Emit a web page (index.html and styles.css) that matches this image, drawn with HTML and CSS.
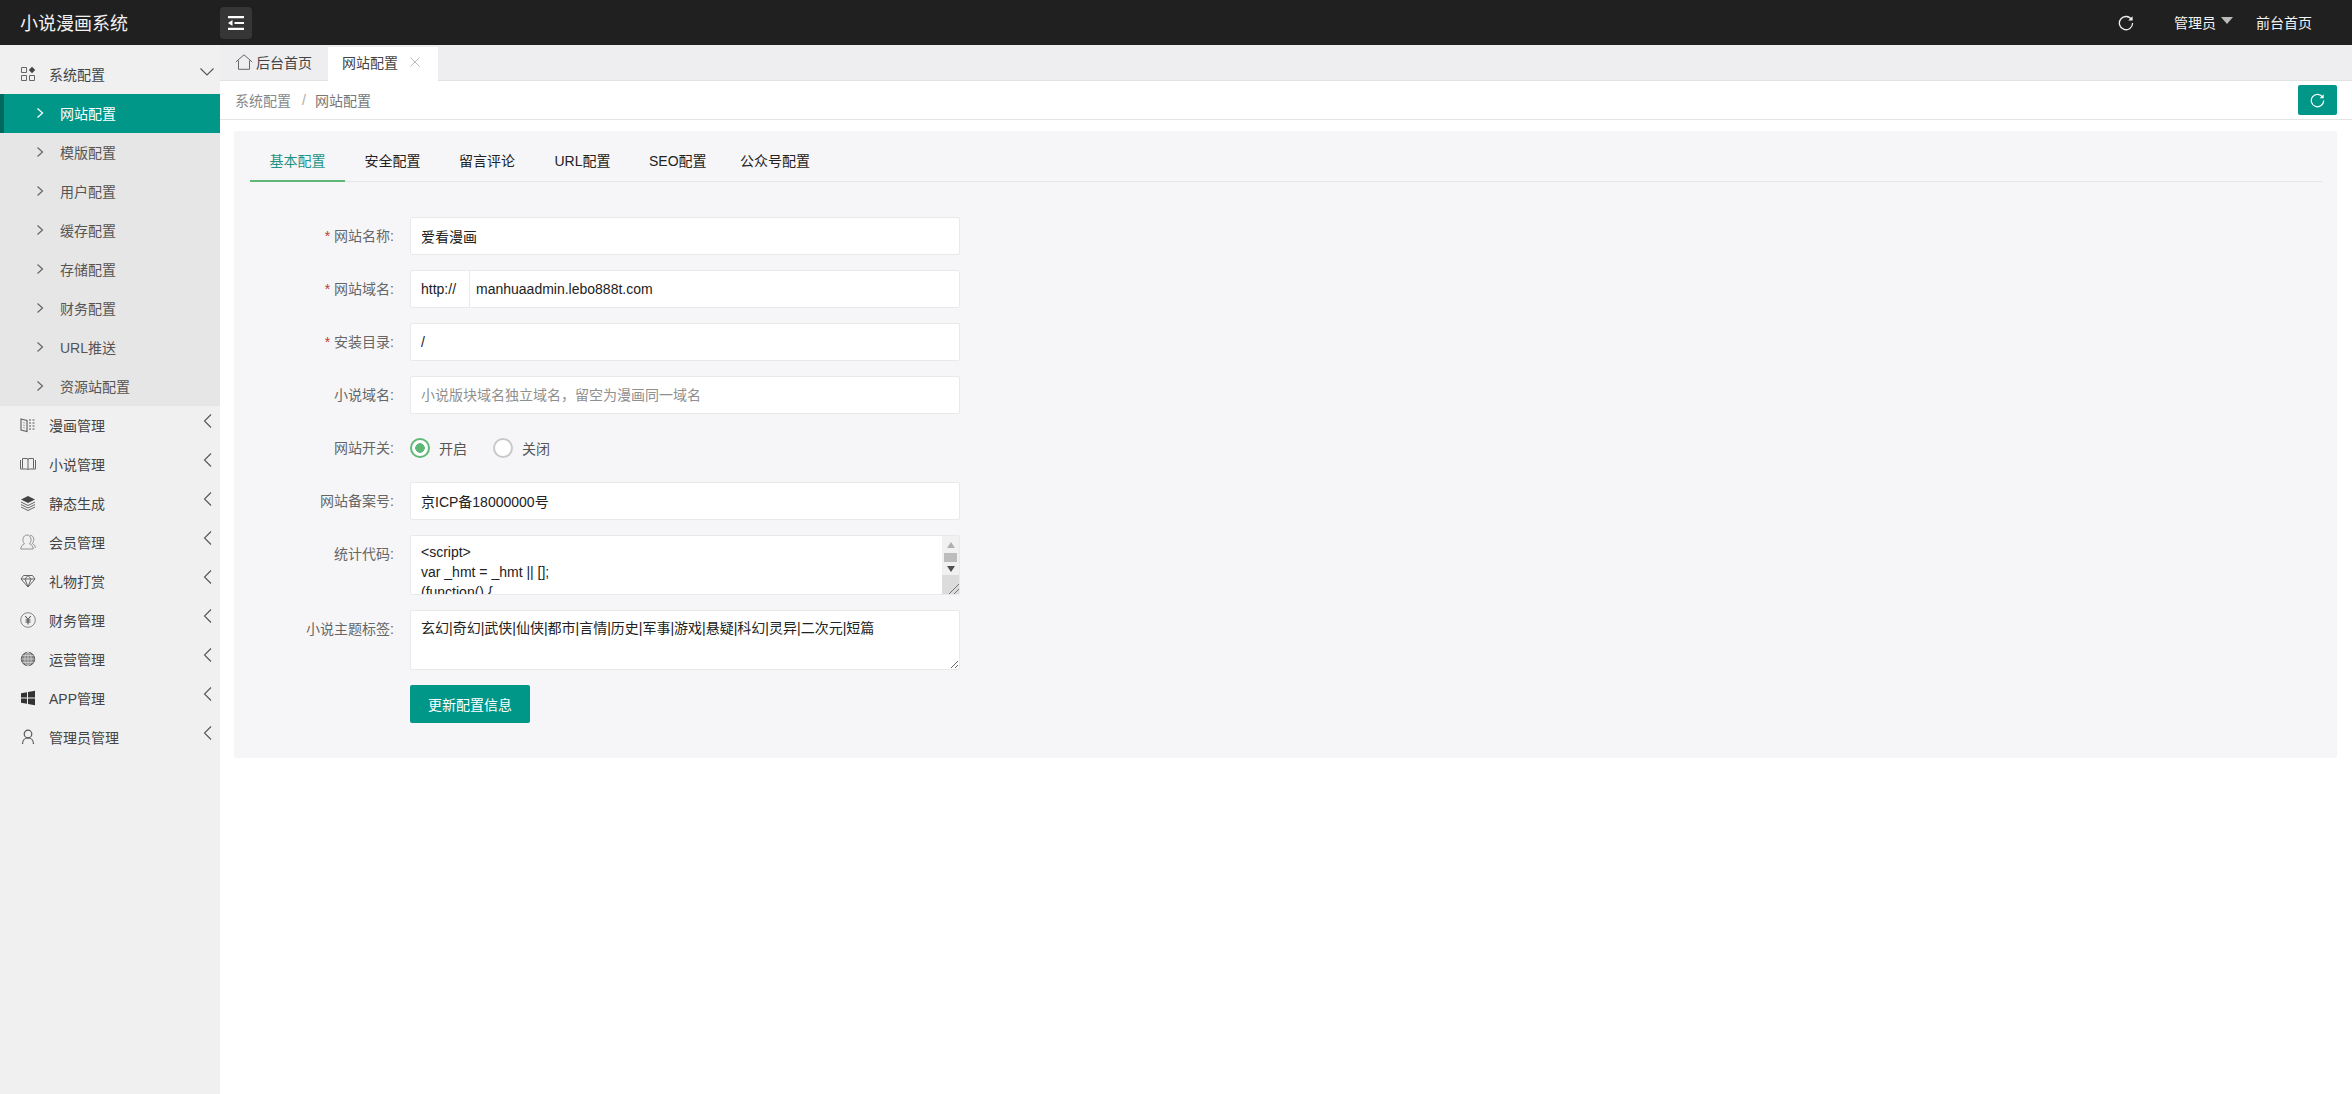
FILE: index.html
```html
<!DOCTYPE html>
<html lang="zh-CN">
<head>
<meta charset="utf-8">
<title>小说漫画系统</title>
<link rel="stylesheet" href="styles.css">
</head>
<body>
<header class="topbar">
  <div class="brand">小说漫画系统</div>
  <button class="menu-toggle" type="button" aria-label="toggle">
    <svg width="16" height="14" viewBox="0 0 16 14"><path d="M0 1.2h16M6.5 7H16M0 12.8h16" stroke="#fff" stroke-width="2.2" fill="none"/><path d="M0 7l4.5-3v6z" fill="#fff"/></svg>
  </button>
  <div class="top-actions">
    <svg class="top-refresh" width="16" height="16" viewBox="0 0 16 16"><path d="M13.6 4.6A6.6 6.6 0 1 0 14.6 8" fill="none" stroke="#eee" stroke-width="1.3"/><path d="M14.6 1.2v4.4h-4.4z" fill="#eee"/></svg>
    <span class="top-user">管理员<i class="caret"></i></span>
    <span class="top-link">前台首页</span>
  </div>
</header>
<div class="shell">
  <aside class="sidebar">
    <div class="nav-item">
      <svg class="nav-icon" viewBox="0 0 16 16"><path d="M1.5 1.5h5v5h-5zM1.5 9.5h5v5h-5zM9.5 9.5h5v5h-5z" fill="none" stroke="#666"/><path d="M12 .8l3.2 3.2-3.2 3.2L8.800 4z" fill="#444"/></svg>
      <span>系统配置</span>
      <svg class="nav-arrow" viewBox="0 0 16 16"><path d="M1.500 4.500L8 11l6.500-6.500" fill="none" stroke="#555" stroke-width="1.100"/></svg>
    </div>
    <div class="submenu">
      <div class="sub-item active"><svg class="sub-arrow" viewBox="0 0 8 12"><path d="M1.500 1.500L6.500 6l-5 4.500" fill="none" stroke="#fff" stroke-width="1.300"/></svg><span>网站配置</span></div>
      <div class="sub-item"><svg class="sub-arrow" viewBox="0 0 8 12"><path d="M1.500 1.500L6.500 6l-5 4.500" fill="none" stroke="#666" stroke-width="1.200"/></svg><span>模版配置</span></div>
      <div class="sub-item"><svg class="sub-arrow" viewBox="0 0 8 12"><path d="M1.500 1.500L6.500 6l-5 4.500" fill="none" stroke="#666" stroke-width="1.200"/></svg><span>用户配置</span></div>
      <div class="sub-item"><svg class="sub-arrow" viewBox="0 0 8 12"><path d="M1.500 1.500L6.500 6l-5 4.500" fill="none" stroke="#666" stroke-width="1.200"/></svg><span>缓存配置</span></div>
      <div class="sub-item"><svg class="sub-arrow" viewBox="0 0 8 12"><path d="M1.500 1.500L6.500 6l-5 4.500" fill="none" stroke="#666" stroke-width="1.200"/></svg><span>存储配置</span></div>
      <div class="sub-item"><svg class="sub-arrow" viewBox="0 0 8 12"><path d="M1.500 1.500L6.500 6l-5 4.500" fill="none" stroke="#666" stroke-width="1.200"/></svg><span>财务配置</span></div>
      <div class="sub-item"><svg class="sub-arrow" viewBox="0 0 8 12"><path d="M1.500 1.500L6.500 6l-5 4.500" fill="none" stroke="#666" stroke-width="1.200"/></svg><span>URL推送</span></div>
      <div class="sub-item"><svg class="sub-arrow" viewBox="0 0 8 12"><path d="M1.500 1.500L6.500 6l-5 4.500" fill="none" stroke="#666" stroke-width="1.200"/></svg><span>资源站配置</span></div>
    </div>
    <div class="nav-item">
      <svg class="nav-icon" viewBox="0 0 16 16"><path d="M1 2l6 1.500v11L1 13z" fill="none" stroke="#666" stroke-width="1.200"/><path d="M3 5.500l2 .5M3 8l2 .5M3 10.500l2 .5" stroke="#aaa"/><path d="M9 3h2M12.500 3h2M9 6h2M12.500 6h2M9 9h2M12.500 9h2M9 12h2M12.500 12h2" stroke="#888" stroke-width="1.300"/></svg>
      <span>漫画管理</span>
      <svg class="nav-arrow back" viewBox="0 0 16 16"><path d="M11 1.500L4.500 8l6.500 6.500" fill="none" stroke="#555" stroke-width="1.100"/></svg>
    </div>
    <div class="nav-item">
      <svg class="nav-icon" viewBox="0 0 16 16"><path d="M.5 4v9M15.500 4v9M2.500 12.500V2.500H7Q8 2.500 8 4v9M13.500 12.500V2.500H9Q8 2.500 8 4M.5 13h6l1.500.5 1.500-.5h6" fill="none" stroke="#666"/></svg>
      <span>小说管理</span>
      <svg class="nav-arrow back" viewBox="0 0 16 16"><path d="M11 1.500L4.500 8l6.500 6.500" fill="none" stroke="#555" stroke-width="1.100"/></svg>
    </div>
    <div class="nav-item">
      <svg class="nav-icon" viewBox="0 0 16 16"><path d="M8 1l7 3.500L8 8 1 4.500z" fill="#444"/><path d="M1 7l7 3.500L15 7M1 9.500L8 13l7-3.500M1 12l7 3.500 7-3.500" fill="none" stroke="#666"/></svg>
      <span>静态生成</span>
      <svg class="nav-arrow back" viewBox="0 0 16 16"><path d="M11 1.500L4.500 8l6.500 6.500" fill="none" stroke="#555" stroke-width="1.100"/></svg>
    </div>
    <div class="nav-item">
      <svg class="nav-icon" viewBox="0 0 16 16"><path d="M.8 15c0-3 1.800-4.300 3.700-5.200-1.500-1.500-1.700-3-1.500-5C3.300 2.500 5 1 7 1s3.700 1.500 4 3.800c.2 2-.3 3.500-1.500 5 2 .9 3.700 2.200 3.700 5.200zM10 1.200c2.500.3 3.800 2 3.800 4 0 1.500-.5 3-1.500 4.300 1.800.8 3 2.200 3 4.500" fill="none" stroke="#888" stroke-width=".9"/></svg>
      <span>会员管理</span>
      <svg class="nav-arrow back" viewBox="0 0 16 16"><path d="M11 1.500L4.500 8l6.500 6.500" fill="none" stroke="#555" stroke-width="1.100"/></svg>
    </div>
    <div class="nav-item">
      <svg class="nav-icon" viewBox="0 0 16 16"><path d="M3.500 2.500h9L15 6l-7 8-7-8zM1 6h14M5 6l3 8 3-8M5 6l3-3.500L11 6" fill="none" stroke="#666"/></svg>
      <span>礼物打赏</span>
      <svg class="nav-arrow back" viewBox="0 0 16 16"><path d="M11 1.500L4.500 8l6.500 6.500" fill="none" stroke="#555" stroke-width="1.100"/></svg>
    </div>
    <div class="nav-item">
      <svg class="nav-icon" viewBox="0 0 16 16"><circle cx="8" cy="8" r="7.300" fill="none" stroke="#777" stroke-width=".9"/><path d="M5.300 4L8 7.500 10.700 4M8 7.500V12.500M5.500 8h5M5.500 10h5" fill="none" stroke="#444"/></svg>
      <span>财务管理</span>
      <svg class="nav-arrow back" viewBox="0 0 16 16"><path d="M11 1.500L4.500 8l6.500 6.500" fill="none" stroke="#555" stroke-width="1.100"/></svg>
    </div>
    <div class="nav-item">
      <svg class="nav-icon" viewBox="0 0 16 16"><circle cx="8" cy="8" r="6.700" fill="#888" stroke="#555"/><path d="M1.500 8h13M2.500 4.500h11M2.500 11.500h11M8 1.300v13.400" stroke="#ddd" stroke-width=".7"/><ellipse cx="8" cy="8" rx="3.200" ry="6.700" fill="none" stroke="#ddd" stroke-width=".7"/></svg>
      <span>运营管理</span>
      <svg class="nav-arrow back" viewBox="0 0 16 16"><path d="M11 1.500L4.500 8l6.500 6.500" fill="none" stroke="#555" stroke-width="1.100"/></svg>
    </div>
    <div class="nav-item">
      <svg class="nav-icon" viewBox="0 0 16 16"><path d="M1 3.200l6-1v5.300H1zM8 2l7-1.200v6.700H8zM1 8.500h6v5.300l-6-1zM8 8.500h7v6.700L8 14z" fill="#333"/></svg>
      <span>APP管理</span>
      <svg class="nav-arrow back" viewBox="0 0 16 16"><path d="M11 1.500L4.500 8l6.500 6.500" fill="none" stroke="#555" stroke-width="1.100"/></svg>
    </div>
    <div class="nav-item">
      <svg class="nav-icon" viewBox="0 0 16 16"><circle cx="8" cy="5" r="3.800" fill="none" stroke="#555" stroke-width="1.200"/><path d="M2.500 15c0-3.500 2.300-6 5.500-6s5.500 2.500 5.500 6" fill="none" stroke="#555" stroke-width="1.200"/></svg>
      <span>管理员管理</span>
      <svg class="nav-arrow back" viewBox="0 0 16 16"><path d="M11 1.500L4.500 8l6.500 6.500" fill="none" stroke="#555" stroke-width="1.100"/></svg>
    </div>
  </aside>
  <main class="main">
    <div class="page-tabs">
      <div class="page-tab home">
        <svg width="18" height="16" viewBox="0 0 18 16"><path d="M.8 8L9 .8 17.200 8M3.500 6.500v8.800h11V6.500" fill="none" stroke="#666"/></svg>
        <span>后台首页</span>
      </div>
      <div class="page-tab current">
        <span>网站配置</span>
        <svg width="10" height="10" viewBox="0 0 10 10"><path d="M.5.5l9 9M9.500.5l-9 9" stroke="#bbb"/></svg>
      </div>
    </div>
    <div class="crumbs">
      <span class="crumb">系统配置</span>
      <span class="crumb-sep">/</span>
      <span class="crumb last">网站配置</span>
      <button class="reload" type="button" aria-label="reload">
        <svg width="15" height="15" viewBox="0 0 16 16"><path d="M13.600 4.600A6.600 6.600 0 1 0 14.600 8" fill="none" stroke="#fff" stroke-width="1.300"/><path d="M14.600 1.200v4.400h-4.400z" fill="#fff"/></svg>
      </button>
    </div>
    <section class="card">
      <nav class="form-tabs">
        <span class="form-tab on">基本配置</span>
        <span class="form-tab">安全配置</span>
        <span class="form-tab">留言评论</span>
        <span class="form-tab">URL配置</span>
        <span class="form-tab">SEO配置</span>
        <span class="form-tab">公众号配置</span>
      </nav>
      <form class="form">
        <div class="field">
          <label class="field-label"><em>*</em> 网站名称:</label>
          <input class="text-input" type="text" value="爱看漫画">
        </div>
        <div class="field">
          <label class="field-label"><em>*</em> 网站域名:</label>
          <div class="input-group">
            <span class="input-prefix">http://</span>
            <input class="group-input" type="text" value="manhuaadmin.lebo888t.com">
          </div>
        </div>
        <div class="field">
          <label class="field-label"><em>*</em> 安装目录:</label>
          <input class="text-input" type="text" value="/">
        </div>
        <div class="field">
          <label class="field-label">小说域名:</label>
          <input class="text-input" type="text" placeholder="小说版块域名独立域名，留空为漫画同一域名">
        </div>
        <div class="field">
          <label class="field-label">网站开关:</label>
          <div class="radios">
            <label class="radio"><input type="radio" name="sw" checked><span>开启</span></label>
            <label class="radio"><input type="radio" name="sw"><span>关闭</span></label>
          </div>
        </div>
        <div class="field">
          <label class="field-label">网站备案号:</label>
          <input class="text-input" type="text" value="京ICP备18000000号">
        </div>
        <div class="field">
          <label class="field-label">统计代码:</label>
          <div class="area-wrap">
            <textarea class="area code"><script>
var _hmt = _hmt || [];
(function() {
  var hm = document.createElement("script");
</script></textarea>
            <div class="fake-scroll">
              <i class="up"></i><b></b><i class="down"></i>
              <div class="scroll-rest"></div>
            </div>
          </div>
        </div>
        <div class="field">
          <label class="field-label">小说主题标签:</label>
          <div class="area-wrap">
            <textarea class="area tags">玄幻|奇幻|武侠|仙侠|都市|言情|历史|军事|游戏|悬疑|科幻|灵异|二次元|短篇</textarea>
          </div>
        </div>
        <div class="field">
          <span class="field-label"></span>
          <button class="submit" type="button">更新配置信息</button>
        </div>
      </form>
    </section>
  </main>
</div>
</body>
</html>
```
FILE: styles.css
```css
* { box-sizing: border-box; }
html, body { margin: 0; height: 100%; }
body {
  font-family: "Liberation Sans", "Noto Sans CJK SC", sans-serif;
  font-size: 14px;
  color: #333;
  background: #fff;
  display: flex;
  flex-direction: column;
  overflow: hidden;
}
button { font-family: inherit; border: 0; padding: 0; cursor: pointer; }

.topbar {
  height: 45px;
  flex: none;
  background: #202020;
  display: flex;
  align-items: center;
  color: #fff;
}
.brand { width: 220px; padding: 0 0 2px 20px; font-size: 18px; color: #f2f2f2; }
.menu-toggle {
  width: 32px;
  height: 32px;
  background: #363636;
  border-radius: 4px;
  display: flex;
  align-items: center;
  justify-content: center;
}
.top-actions { margin-left: auto; display: flex; align-items: center; padding-right: 40px; color: #f4f4f4; }
.top-refresh { margin-right: 40px; }
.top-user { display: flex; align-items: center; width: 82px; padding-bottom: 2px; }
.top-link { padding-bottom: 2px; }
.caret {
  margin: -2px 0 0 5px;
  border-style: solid;
  border-width: 7px 6.500px 0;
  border-color: #bbb transparent transparent;
}

.shell { flex: 1; display: flex; min-height: 0; }
.sidebar { width: 220px; flex: none; background: #f0f0f1; padding-top: 10px; color: #444; }
.nav-item {
  height: 39px;
  display: flex;
  align-items: center;
  padding: 0 0 2px 20px;
  position: relative;
}
.nav-icon { width: 16px; height: 16px; margin-right: 13px; flex: none; }
.nav-arrow { position: absolute; left: 199px; top: 9px; width: 16px; height: 16px; }
.nav-arrow.back { left: 200px; top: 7px; }
.submenu { background: #e6e6e7; }
.sub-item { height: 39px; display: flex; align-items: center; padding: 0 0 2px 36px; color: #555; }
.sub-item span { margin-left: 16px; }
.sub-arrow { width: 8px; height: 12px; flex: none; }
.sub-item.active { background: #009688; color: #fff; border-left: 4px solid #00695f; padding-left: 32px; }

.main { flex: 1; min-width: 0; display: flex; flex-direction: column; }
.page-tabs {
  height: 36px;
  flex: none;
  background: #eeeef0;
  border-bottom: 1px solid #e2e2e2;
  display: flex;
  align-items: flex-end;
  padding-left: 15px;
}
.page-tab { height: 34px; display: flex; align-items: center; color: #444; }
.page-tab.home { gap: 3px; width: 93px; padding-bottom: 1px; height: 35px; }
.page-tab.current { width: 110px; background: #fff; padding-left: 14px; gap: 12px; margin-bottom: -1px; height: 34px; padding-bottom: 4px; }

.crumbs {
  height: 39px;
  flex: none;
  border-bottom: 1px solid #e4e4e4;
  display: flex;
  align-items: center;
  padding: 0 15px;
  color: #888;
}
.crumb-sep { margin: 0 9px 0 11px; color: #aaa; }
.crumb.last { color: #777; }
.reload {
  margin-left: auto;
  width: 39px;
  height: 30px;
  background: #009688;
  border-radius: 2px;
  display: flex;
  align-items: center;
  justify-content: center;
}

.card {
  margin: 11px 15px 0 14px;
  background: #f6f6f8;
  border-radius: 2px;
  padding: 0 15px 35px 16px;
}
.form-tabs { height: 51px; display: flex; border-bottom: 1px solid #e6e6e6; }
.form-tab { height: 51px; padding: 10px 19px 0 19.500px; line-height: 40px; color: #222; }
.form-tab.on { color: #1f9384; border-bottom: 2px solid #5fb878; width: 95px; }
.form-tab:nth-child(4) { margin-left: 1px; }
.form-tab:nth-child(6) { margin-left: -5px; }
.form { padding-top: 35px; display: flex; flex-direction: column; gap: 15px; }
.field { display: flex; align-items: flex-start; min-height: 38px; }
.field-label { width: 160px; flex: none; text-align: right; padding: 9px 16px 0 0; line-height: 20px; color: #666; }
.field-label em { color: #c0392b; font-style: normal; }

.text-input, .group-input {
  font: inherit;
  color: #222;
  outline: 0;
  height: 38px;
  background: #fff;
}
.text-input { width: 550px; border: 1px solid #e9e9e9; border-radius: 2px; padding: 0 10px; }
.text-input::placeholder { color: #8f8f8f; }
.input-group { width: 550px; height: 38px; display: flex; border: 1px solid #e9e9e9; border-radius: 2px; background: #fff; }
.input-prefix { width: 59px; flex: none; padding-left: 10px; line-height: 36px; border-right: 1px solid #e9e9e9; color: #222; }
.group-input { flex: 1; min-width: 0; height: 36px; border: 0; padding: 0 6px; }

.radios { height: 38px; display: flex; align-items: center; gap: 26px; }
.radio { display: flex; align-items: center; gap: 9px; color: #555; }
.radio input {
  appearance: none;
  width: 20px;
  height: 20px;
  margin: 0;
  border: 2px solid #c8c8c8;
  border-radius: 50%;
  background: #fff;
}
.radio input:checked { border-color: #5fb878; background: radial-gradient(circle, #5fb878 0 4.500px, #fff 5px); }

.area-wrap { position: relative; width: 550px; height: 60px; }
.area {
  display: block;
  width: 550px;
  height: 60px;
  font: inherit;
  line-height: 20px;
  color: #222;
  border: 1px solid #e9e9e9;
  border-radius: 2px;
  background: #fff;
  outline: 0;
  padding: 6px 22px 0 10px;
  overflow: hidden;
  resize: vertical;
}
.tags { padding-top: 7px; }
.fake-scroll {
  position: absolute;
  right: 1px;
  top: 1px;
  bottom: 1px;
  width: 17px;
  background: #f1f1f1;
  display: flex;
  flex-direction: column;
  align-items: center;
  pointer-events: none;
  padding-top: 6px;
}
.fake-scroll i { width: 0; height: 0; border-style: solid; border-color: transparent; flex: none; }
.fake-scroll .up { border-width: 0 4px 6px; border-bottom-color: #b0b0b0; }
.fake-scroll b { display: block; width: 13px; height: 9px; background: #bdbdbd; margin: 5px 0 4px; flex: none; }
.fake-scroll .down { border-width: 6px 4px 0; border-top-color: #505050; }
.scroll-rest {
  margin-top: 3px;
  flex: 1;
  width: 100%;
  background:
    linear-gradient(135deg, transparent 0 70%, #777 70% 74%, transparent 74% 84%, #777 84% 88%, transparent 88%),
    #dcdcdc;
}

.submit {
  width: 120px;
  height: 38px;
  background: #009688;
  color: #fff;
  font-size: 14px;
  border-radius: 2px;
}
```
